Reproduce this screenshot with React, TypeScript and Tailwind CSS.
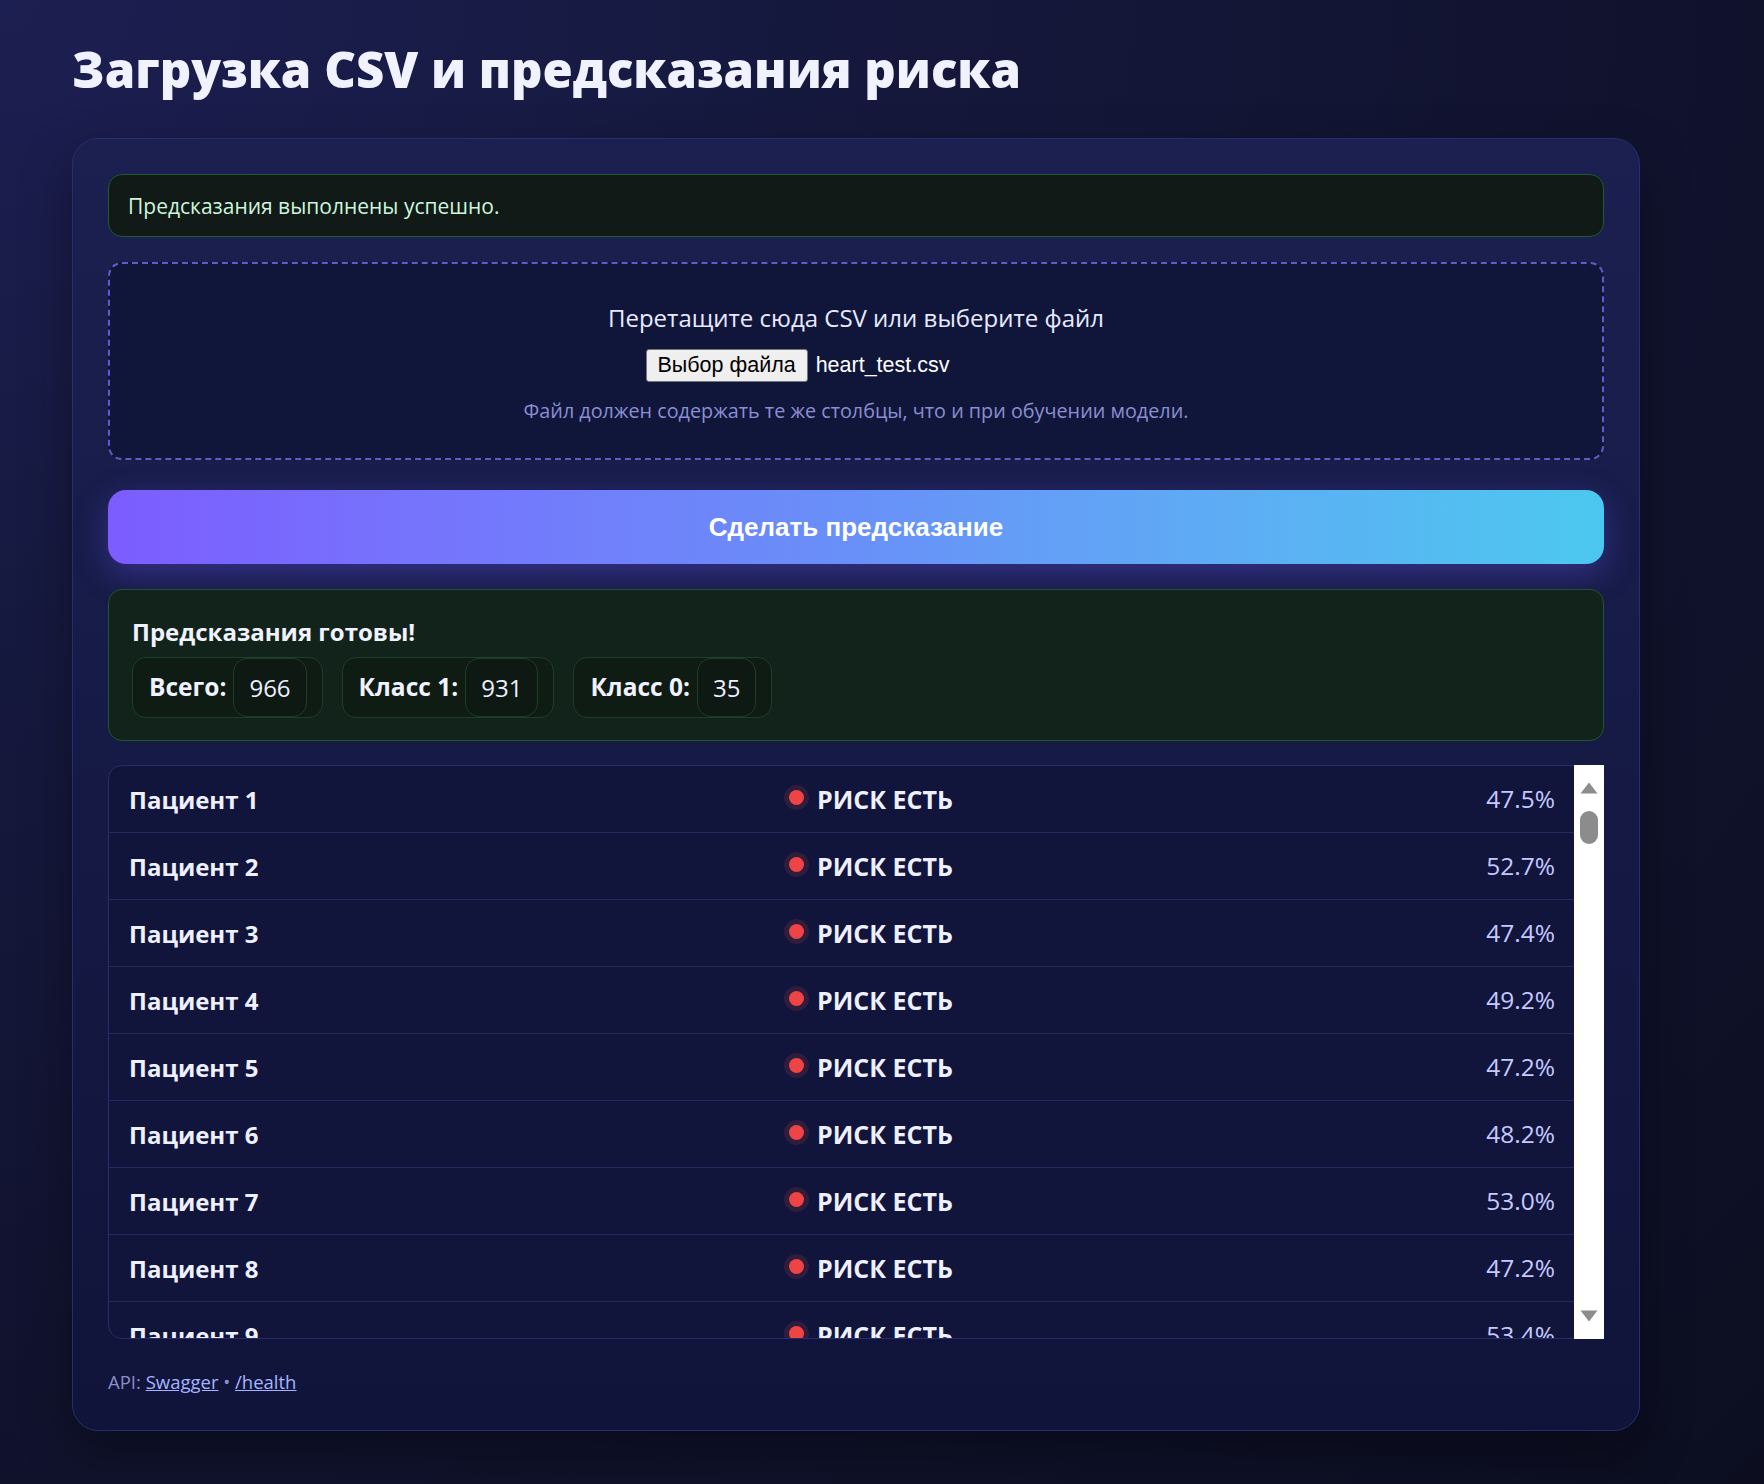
import React from 'react';

const results = [47.5, 52.7, 47.4, 49.2, 47.2, 48.2, 53.0, 47.2, 53.4, 50.6, 48.9, 51.2];

const stats = [
  { label: 'Всего:', value: 966 },
  { label: 'Класс 1:', value: 931 },
  { label: 'Класс 0:', value: 35 },
];

export default function App() {
  return (
    <div className="min-h-screen w-full bg-[radial-gradient(ellipse_at_top_left,#1c1f51_0%,#141739_40%,#0c0e20_100%)] px-[72px] pt-[37px] pb-[54px] font-['Open_Sans',sans-serif] text-[#eef0ff]">
      {/* Title */}
      <h1 className="text-[49px] leading-[64px] font-extrabold text-[#f1f2ff]">Загрузка CSV и предсказания риска</h1>

      {/* Card */}
      <div className="mt-[37px] w-[1568px] rounded-[26px] border border-[#272d6e] bg-gradient-to-b from-[#1b2050] to-[#10143a] px-[35px] pt-[35px] pb-[36px] shadow-[0_20px_50px_rgba(0,0,0,0.35)]">
        <div className="flex h-[63px] items-center rounded-[14px] border border-[#1e5a34] bg-[#111a17] px-[19px] pt-[2px] text-[21px] text-[#cdf6dc]">
          Предсказания выполнены успешно.
        </div>

        {/* Drop zone */}
        <div className="mt-[25px] flex flex-col items-center rounded-[14px] border-2 border-dashed border-[#5a5ec6] bg-[#10153a] pt-[38px] pb-[33px]">
          <div className="text-[24px] leading-[32px] text-[#e8eaff]">Перетащите сюда CSV или выберите файл</div>
          <div className="mt-[15px] flex w-[421px] items-center gap-[8px] font-['Liberation_Sans',Arial,sans-serif] text-[21.5px]">
            <span className="flex h-[33px] items-center rounded-[3px] border border-[#767676] bg-[#efefef] px-[11px] text-black">Выбор файла</span>
            <span className="text-white">heart_test.csv</span>
          </div>
          <div className="mt-[15px] text-[19.8px] leading-[28px] text-[#8a8fd2]">Файл должен содержать те же столбцы, что и при обучении модели.</div>
        </div>

        {/* Predict button */}
        <button className="mt-[30px] flex h-[74px] w-full items-center justify-center rounded-[18px] bg-gradient-to-r from-[#7c5cff] via-[#6890f8] to-[#4bc8ef] font-['Liberation_Sans',Arial,sans-serif] text-[26px] font-bold text-white shadow-[0_10px_32px_rgba(110,90,255,0.35)]">
          Сделать предсказание
        </button>

        {/* Summary */}
        <div className="mt-[25px] h-[152px] rounded-[14px] border border-[#1f5530] bg-[#11231a] px-[23px] pt-[26px]">
          <div className="text-[24px] leading-[32px] font-bold text-[#f1f2ff]">Предсказания готовы!</div>
          <div className="mt-[9px] flex gap-[19px]">
            {stats.map((s) => (
              <div key={s.label} className="flex h-[61px] items-stretch rounded-[14px] border border-[#1d3f29] bg-[#0e1c14] pl-[16px] pr-[15px]">
                <span className="flex items-center text-[24.5px] font-bold text-[#f1f2ff]">{s.label}</span>
                <span className="ml-[7px] flex items-center rounded-[14px] border border-[#1d3f29] bg-[#0d1912] px-[15px] text-[24px] text-[#eef0ff]">{s.value}</span>
              </div>
            ))}
          </div>
        </div>

        {/* Results list */}
        <div className="mt-[24px] flex h-[574px] rounded-[14px] border border-[#272d68] bg-[#11153b]">
          <div className="flex-1 overflow-hidden rounded-l-[13px]">
            {results.map((p, i) => (
              <div key={i} className="grid h-[67px] grid-cols-[660px_1fr_auto] items-center border-b border-[#232a5e] pl-[20px] pr-[19px] pt-[1px]">
                <span className="text-[24px] font-bold text-[#eef0ff]">Пациент {i + 1}</span>
                <span className="flex items-center gap-[13px]">
                  <span className="-mt-[4px] h-[15px] w-[15px] rounded-full bg-[#ef4444] shadow-[0_0_0_5px_rgba(239,68,68,0.14)]" />
                  <span className="text-[25px] font-bold text-[#eef0ff]">РИСК ЕСТЬ</span>
                </span>
                <span className="text-[24.5px] text-[#c5c9ff]">{p.toFixed(1)}%</span>
              </div>
            ))}
          </div>
          {/* scrollbar */}
          <div className="relative -my-px -mr-px w-[30px] bg-white">
            <svg className="absolute left-[6px] top-[17px] h-[12px] w-[18px]" viewBox="0 0 18 12">
              <path d="M9 0.5 L17.5 11.5 H0.5 Z" fill="#8c8c8c" />
            </svg>
            <div className="absolute left-[6px] top-[46px] h-[33px] w-[18px] rounded-full bg-[#8c8c8c]" />
            <svg className="absolute bottom-[17px] left-[6px] h-[12px] w-[18px]" viewBox="0 0 18 12">
              <path d="M0.5 0.5 H17.5 L9 11.5 Z" fill="#8c8c8c" />
            </svg>
          </div>
        </div>

        {/* Footer */}
        <div className="mt-[31px] text-[18.5px] leading-[24px] text-[#8a8fc8]">
          API: <a className="text-[#a6b4ff] underline" href="#">Swagger</a> • <a className="text-[#a6b4ff] underline" href="#">/health</a>
        </div>
      </div>
    </div>
  );
}
